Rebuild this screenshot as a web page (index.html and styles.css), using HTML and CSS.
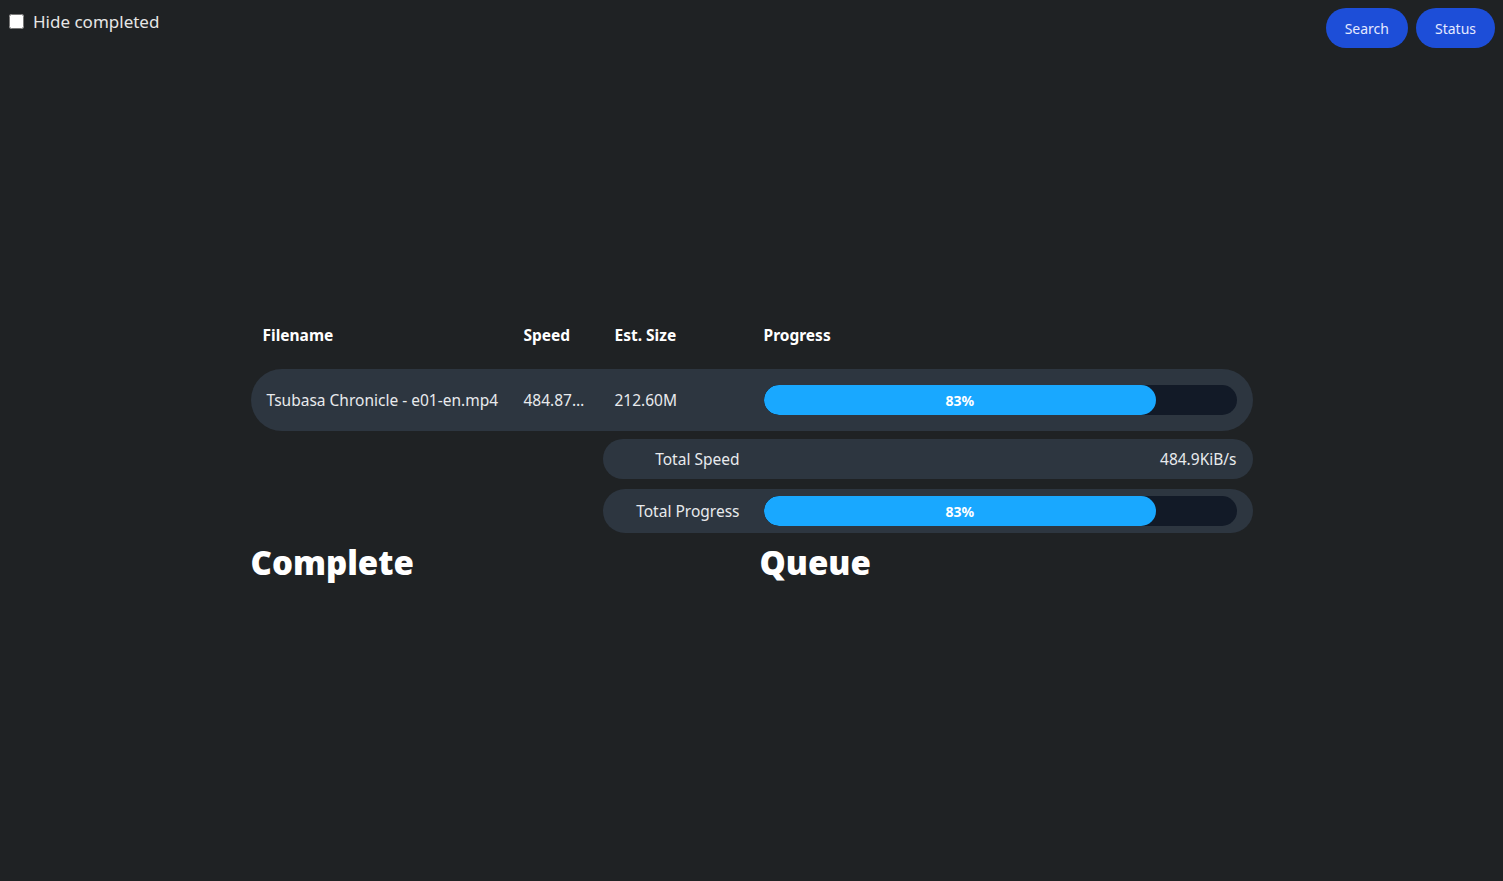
FILE: index.html
```html
<!DOCTYPE html>
<html lang="en">
<head>
<meta charset="utf-8">
<title>Downloads</title>
<link rel="stylesheet" href="styles.css">
</head>
<body>
<header class="topbar">
  <label class="hide-toggle"><input type="checkbox" class="hide-box"> Hide completed</label>
  <nav class="actions">
    <button class="pill-btn">Search</button>
    <button class="pill-btn">Status</button>
  </nav>
</header>

<main class="content">
  <section class="downloads">
    <div class="grid-row head-row">
      <div class="cell cell-first">Filename</div>
      <div class="cell">Speed</div>
      <div class="cell">Est. Size</div>
      <div class="cell">Progress</div>
    </div>
    <div class="grid-row item-row">
      <div class="cell cell-first">Tsubasa Chronicle - e01-en.mp4</div>
      <div class="cell cell-trunc">484.87KiB/s</div>
      <div class="cell">212.60M</div>
      <div class="cell cell-last">
        <div class="bar"><div class="bar-fill" style="width:83%">83%</div></div>
      </div>
    </div>
    <div class="summary-row speed-row">
      <div class="cell sum-label">Total Speed</div>
      <div class="cell cell-last sum-value">484.9KiB/s</div>
    </div>
    <div class="summary-row progress-row">
      <div class="cell sum-label">Total Progress</div>
      <div class="cell cell-last">
        <div class="bar"><div class="bar-fill" style="width:83%">83%</div></div>
      </div>
    </div>
  </section>

  <section class="lists">
    <h2 class="list-title">Complete</h2>
    <h2 class="list-title">Queue</h2>
  </section>
</main>
</body>
</html>
```

FILE: styles.css
```css
html, body {
  margin: 0;
  padding: 0;
  background: #1f2224;
  color: #e8eaed;
  font-family: "Noto Sans", "Open Sans", sans-serif;
  font-size: 15.5px;
}

.topbar {
  display: flex;
  justify-content: space-between;
  align-items: flex-start;
  padding: 8px 8px 0 8px;
}

.hide-toggle {
  display: flex;
  align-items: center;
  gap: 9px;
  font-size: 17px;
  color: #e6e6e6;
  margin-top: 2px;
}

.hide-box {
  width: 15px;
  height: 15px;
  margin: 0 0 0 1px;
}

.actions {
  display: flex;
  gap: 8px;
}

.pill-btn {
  height: 40px;
  padding: 0 19px;
  border: none;
  border-radius: 20px;
  background: #1d4ed8;
  color: #e4e9ff;
  font-family: "Noto Sans", sans-serif;
  font-size: 14px;
}

.content {
  width: 1002px;
  margin: 275px auto 0 auto;
}

.grid-row {
  display: grid;
  grid-template-columns: 261px 91px 149px 501px;
  align-items: center;
}

.cell {
  padding: 0 12px;
  white-space: nowrap;
  overflow: hidden;
}

.head-row {
  font-weight: 700;
  color: #ffffff;
  height: 24px;
}

.item-row {
  margin-top: 22px;
  background: #2d3640;
  border-radius: 31px;
  height: 62px;
}

.item-row .cell-first {
  padding-left: 16px;
}

.cell-trunc {
  text-overflow: ellipsis;
}

.cell-last {
  padding-right: 16px;
}

.bar {
  height: 30px;
  border-radius: 15px;
  background: #121a27;
  overflow: hidden;
}

.bar-fill {
  height: 100%;
  background: #19a8ff;
  border-radius: 15px;
  color: #ffffff;
  font-size: 14px;
  font-weight: 700;
  display: flex;
  align-items: center;
  justify-content: center;
}

.summary-row {
  display: grid;
  grid-template-columns: 149px 501px;
  align-items: center;
  margin-left: 352px;
  background: #2d3640;
  border-radius: 22px;
}

.speed-row {
  margin-top: 8px;
  height: 40px;
}

.progress-row {
  margin-top: 10px;
  height: 44px;
}

.sum-label {
  text-align: right;
}

.sum-value {
  text-align: right;
}

.lists {
  display: grid;
  grid-template-columns: 1fr 1fr;
  gap: 16px;
}

.list-title {
  margin: 8px 0 0 0;
  font-size: 33px;
  font-weight: 900;
  color: #ffffff;
  line-height: 44px;
}
```
